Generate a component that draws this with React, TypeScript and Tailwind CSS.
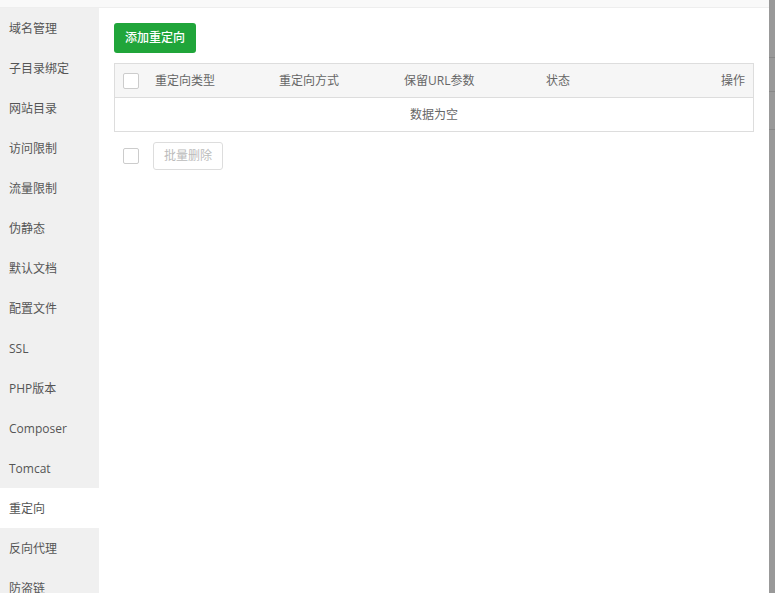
const items = ["域名管理","子目录绑定","网站目录","访问限制","流量限制","伪静态","默认文档","配置文件","SSL","PHP版本","Composer","Tomcat","重定向","反向代理","防盗链"];

export default function App() {
  return (
    <div className="flex h-[593px] w-[775px] overflow-hidden bg-white font-['Open_Sans','Noto_Sans_CJK_SC',sans-serif] text-xs text-[#666]">
      <div className="w-[769px] shrink-0">
        <div className="h-2 border-b border-[#eeeeee] bg-[#f9f9f9]" />
        <div className="flex h-[585px]">
          <div className="w-[99px] shrink-0 overflow-hidden bg-[#f0f0f0]">
            {items.map((t) => (
              <div key={t} className={`h-10 pl-[9px] pt-px leading-10 text-[#555] ${t === "重定向" ? "bg-white" : ""}`}>{t}</div>
            ))}
          </div>
          <div className="flex-1 px-[15px] pt-[15px]">
            <button className="h-[30px] w-[82px] rounded-[3px] bg-[#20a53a] text-xs font-medium text-white">添加重定向</button>
            <div className="mt-[10px] w-[640px] border border-[#dddddd]">
              <div className="flex h-[34px] items-center border-b border-[#dddddd] bg-[#f6f6f6]">
                <span className="ml-2 h-4 w-4 rounded-[2px] border border-[#cccccc] bg-white" />
                <span className="ml-4 w-[124px]">重定向类型</span>
                <span className="w-[125px]">重定向方式</span>
                <span className="w-[142px]">保留URL参数</span>
                <span>状态</span>
                <span className="ml-auto mr-2">操作</span>
              </div>
              <div className="h-[33px] text-center leading-[33px]">数据为空</div>
            </div>
            <div className="mt-[10px] flex items-center">
              <span className="ml-[9px] h-4 w-4 rounded-[2px] border border-[#cccccc] bg-white" />
              <button className="ml-[14px] h-7 w-[70px] rounded-[3px] border border-[#dddddd] bg-white text-xs text-[#bbbbbb]">批量删除</button>
            </div>
          </div>
        </div>
      </div>
      <div className="h-full w-[6px] bg-[#999999]">
        <div className="h-[58px] border-b border-[#888888]" />
        <div className="h-[34px] border-b border-[#888888]" />
        <div className="h-[38px] border-b border-[#888888]" />
      </div>
    </div>
  );
}
